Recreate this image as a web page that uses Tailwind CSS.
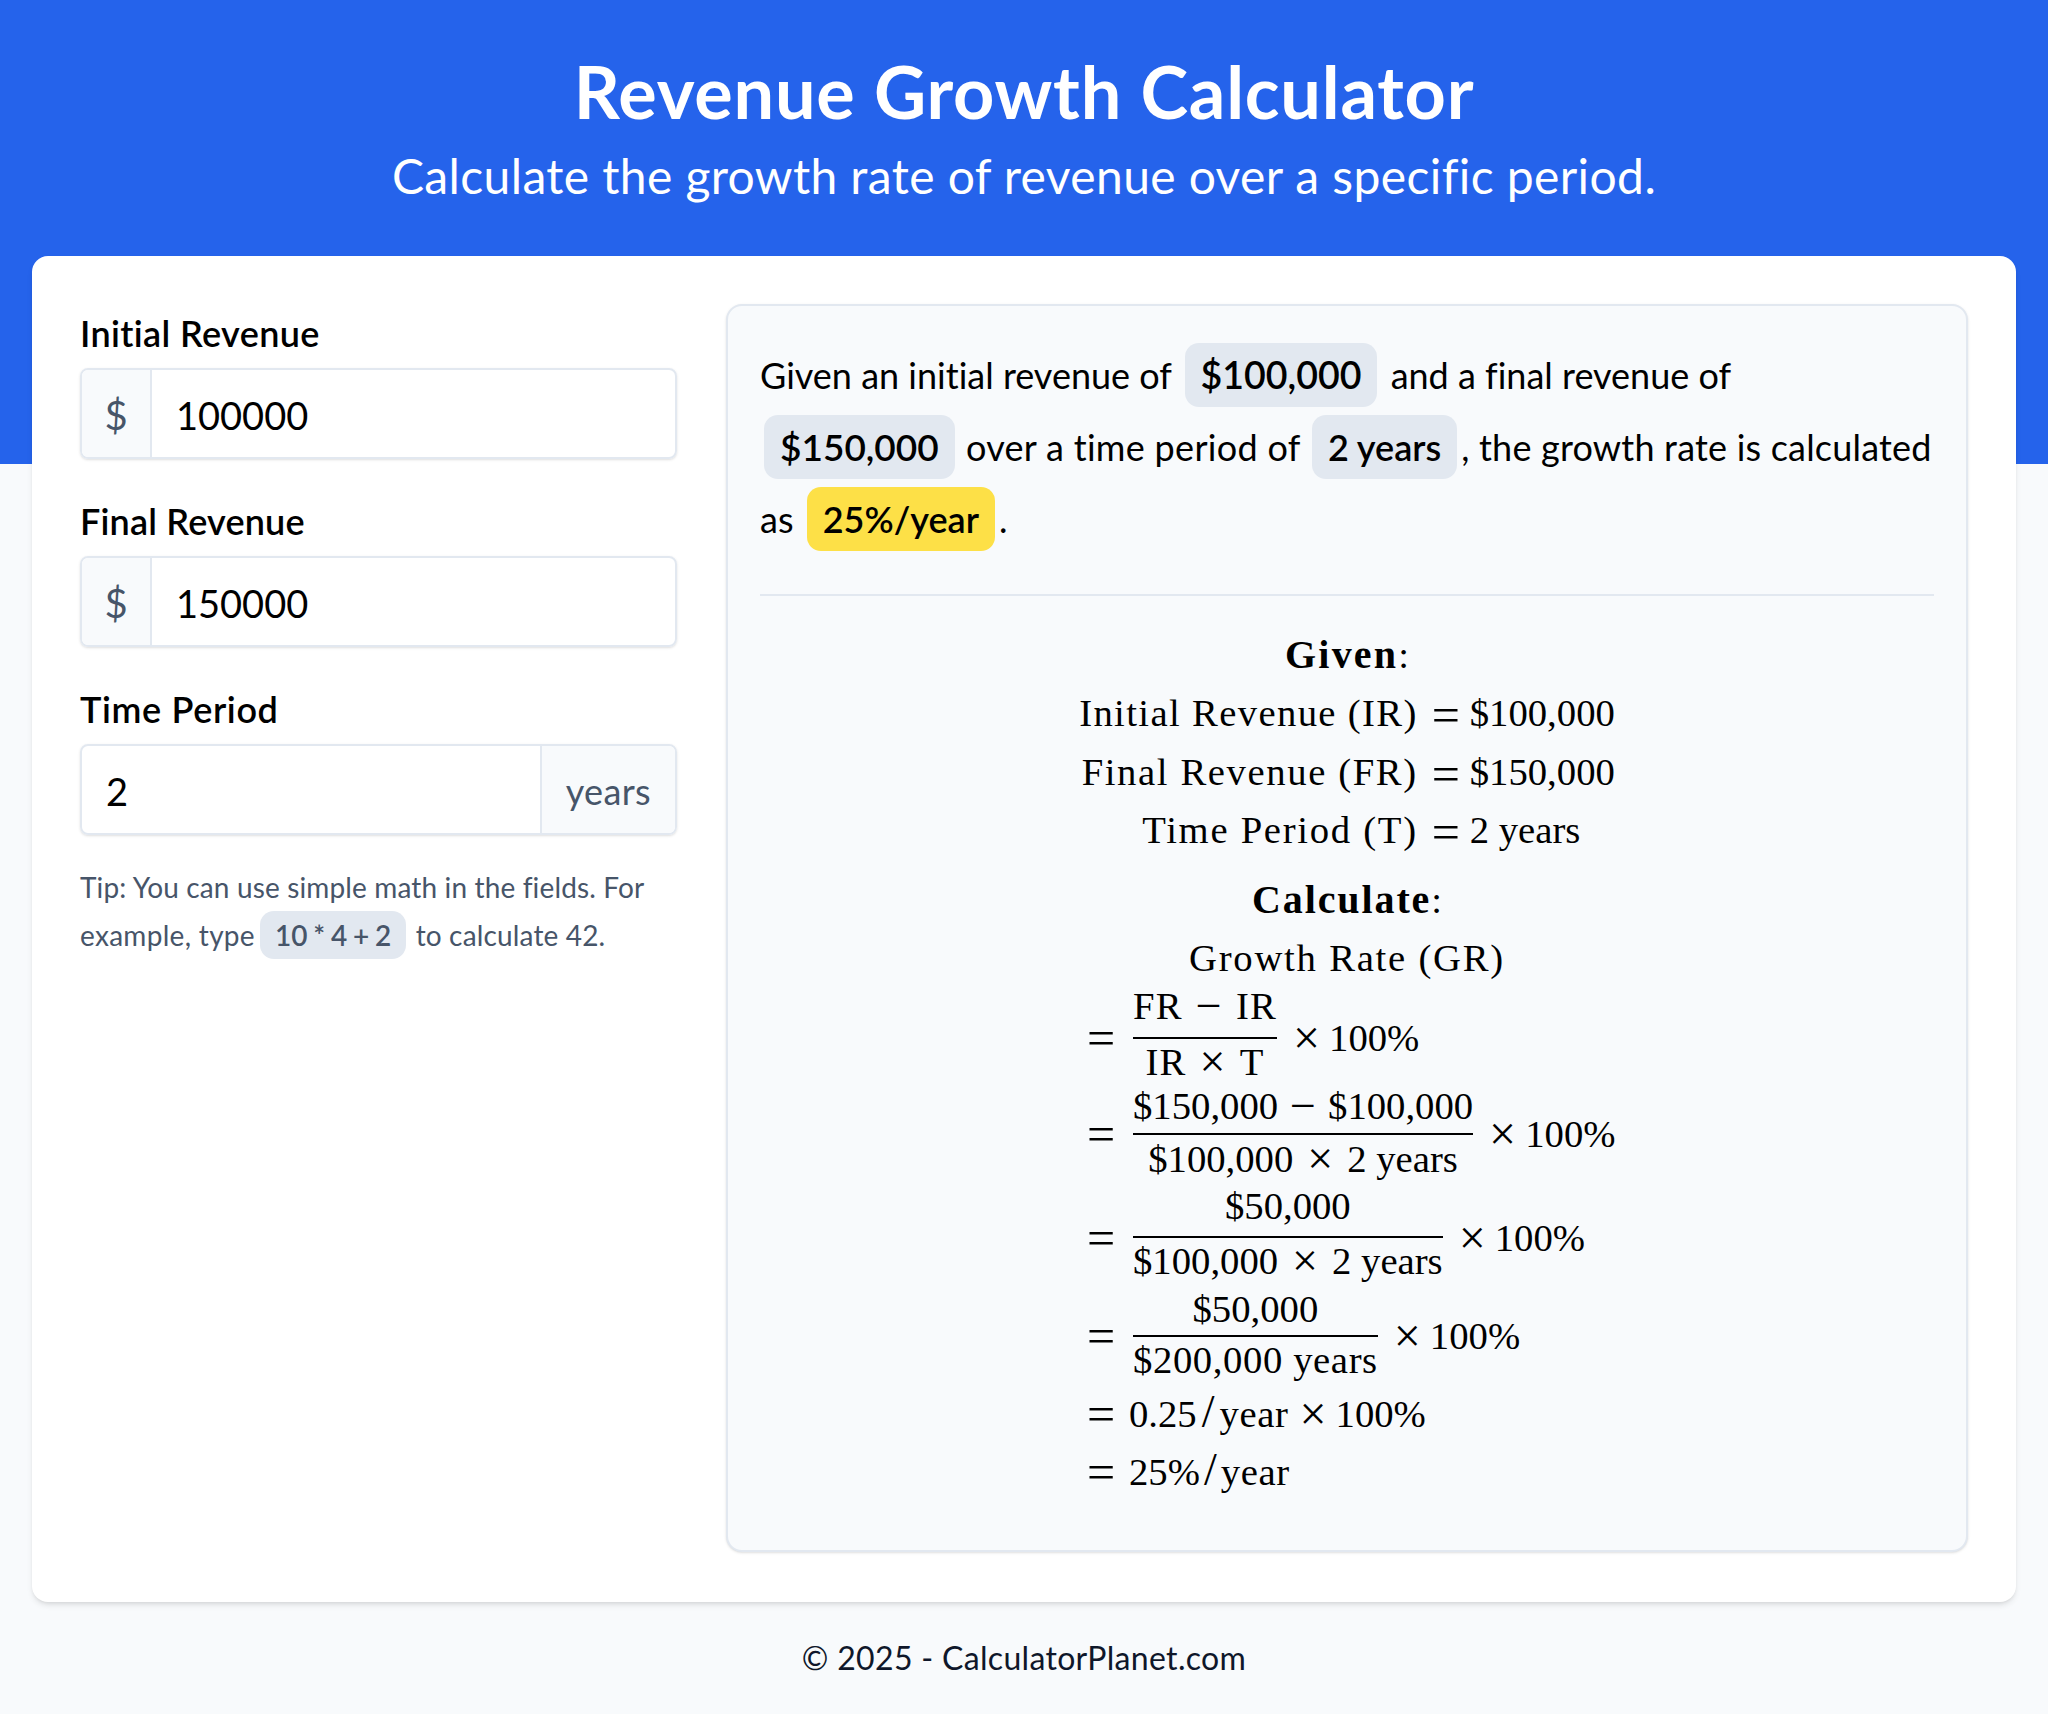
<!DOCTYPE html>
<html lang="en">
<head>
    <meta charset="UTF-8">
    <meta name="viewport" content="width=device-width, initial-scale=1.0">
    <title>Revenue Growth Calculator</title>
    <script src="https://cdn.jsdelivr.net/npm/@tailwindcss/browser@4"></script>
</head>
<body class="bg-[#f8fafc] font-['Lato',sans-serif] text-black [font-variant-ligatures:none]">

    <!-- Header -->
    <header class="bg-[#2563eb] h-[464px] pt-[43px] text-center text-white">
        <h1 class="text-[72px] leading-[97px] font-bold tracking-[0.011em]">Revenue Growth Calculator</h1>
        <p class="text-[48px] leading-[72px] tracking-[0.008em]">Calculate the growth rate of revenue over a specific period.</p>
    </header>

    <!-- Card -->
    <main class="relative mx-[32px] -mt-[208px] h-[1346px] bg-white rounded-[16px] shadow-md p-[48px] flex gap-[49px]">

        <!-- Inputs -->
        <section class="w-[597px] shrink-0">
            <label class="block text-[36px] leading-[48px] font-semibold tracking-[0.01em] mt-[5px] mb-[11px]">Initial Revenue</label>
            <div class="flex h-[91px] border-2 border-[#e2e8f0] rounded-[8px] shadow-sm overflow-hidden">
                <span class="w-[70px] pt-[3px] flex items-center justify-center bg-[#f8fafc] border-r-2 border-[#e2e8f0] text-[40px] text-[#475569]">$</span>
                <div class="flex-1 pt-[3px] flex items-center px-[24px] text-[38px]">100000</div>
            </div>

            <label class="block text-[36px] leading-[48px] font-semibold tracking-[0.005em] mt-[38px] mb-[11px]">Final Revenue</label>
            <div class="flex h-[91px] border-2 border-[#e2e8f0] rounded-[8px] shadow-sm overflow-hidden">
                <span class="w-[70px] pt-[3px] flex items-center justify-center bg-[#f8fafc] border-r-2 border-[#e2e8f0] text-[40px] text-[#475569]">$</span>
                <div class="flex-1 pt-[3px] flex items-center px-[24px] text-[38px]">150000</div>
            </div>

            <label class="block text-[36px] leading-[48px] font-semibold tracking-[0.018em] mt-[38px] mb-[11px]">Time Period</label>
            <div class="flex h-[91px] border-2 border-[#e2e8f0] rounded-[8px] shadow-sm overflow-hidden">
                <div class="flex-1 pt-[3px] flex items-center px-[24px] text-[38px]">2</div>
                <span class="flex items-center pt-[2px] pl-[24px] pr-[24px] bg-[#f8fafc] border-l-2 border-[#e2e8f0] text-[36px] tracking-[0.01em] text-[#475569]">years</span>
            </div>

            <p class="mt-[28px] text-[28px] leading-[48px] tracking-[0.005em] text-[#475569]">Tip: You can use simple math in the fields. For <span class="tracking-[0.3px]">example, type</span><code class="font-['Lato',sans-serif] font-semibold inline-block bg-[#e2e8f0] rounded-[14px] ml-[5px] mr-[2px] px-[15px] leading-[48px] [word-spacing:-1.5px]">10 * 4 + 2</code> <span class="tracking-[0.15px]">to calculate 42.</span></p>
        </section>

        <!-- Result panel -->
        <section class="flex-1 bg-[#f8fafc] border-2 border-[#e2e8f0] rounded-[16px] shadow-sm px-[32px] pt-[33px] h-[1248px]">
            <p class="text-[36px] leading-[72px]">Given an initial revenue of <span class="inline-block mx-[4px] px-[16px] text-[37.5px] leading-[64px] bg-[#e2e8f0] rounded-[14px] font-semibold">$100,000</span> and a final revenue of <span class="inline-block ml-[4px] mr-[2px] px-[16px] text-[37px] leading-[64px] bg-[#e2e8f0] rounded-[14px] font-semibold">$150,000</span> <span class="tracking-[0.3px]">over a time period of</span> <span class="inline-block ml-[2px] mr-[4px] px-[16px] text-[36px] leading-[64px] bg-[#e2e8f0] rounded-[14px] font-semibold">2 years</span><span class="tracking-[0.2px]">, the growth rate is calculated</span> as <span class="inline-block mx-[4px] px-[16px] text-[36px] leading-[64px] bg-[#fde047] rounded-[14px] font-semibold">25%/year</span>.</p>

            <hr class="mt-[39px] border-t-2 border-[#e2e8f0]">

            <!-- Working -->
            <div class="mt-[30px] flex flex-col items-center font-['Liberation_Serif',serif] text-[38.7px] leading-[58.4px]">
                <div><span class="font-bold text-[40px] tracking-[2.2px]">Given</span>:</div>
                <div class="grid grid-cols-[auto_38px_auto]">
                    <div class="text-right pr-[14px] tracking-[1.35px]">Initial Revenue (IR)</div><div><span class="text-[50px] leading-none align-[-6px]">=</span></div><div>$100,000</div>
                    <div class="text-right pr-[14px] tracking-[1.6px]">Final Revenue (FR)</div><div><span class="text-[50px] leading-none align-[-6px]">=</span></div><div>$150,000</div>
                    <div class="text-right pr-[14px] tracking-[1.7px]">Time Period (T)</div><div><span class="text-[50px] leading-none align-[-6px]">=</span></div><div>2 years</div>
                </div>
                <div class="mt-[11px]"><span class="font-bold text-[40px] tracking-[1.9px]">Calculate</span>:</div>
                <div class="tracking-[1.75px]">Growth Rate (GR)</div>
                <div class="flex flex-col self-start ml-[327px] mt-[2px]">
                    <div class="flex items-center h-[98px]">
                        <span class="w-[46px] text-[50px] leading-none">=</span>
                        <span class="inline-flex flex-col items-center leading-[44px]"><span class="pb-[8px] tracking-[1.2px]">FR<span class="mx-[13px] text-[46px] leading-none align-[-2px]">&minus;</span>IR</span><span class="self-stretch pb-[8px] text-center border-t-2 border-black tracking-[1.2px]">IR<span class="mx-[13px] text-[46px] leading-none align-[-2px]">&times;</span>T</span></span>
                        <span class="ml-[16px] mr-[9px] text-[48px] leading-none">&times;</span><span>100%</span>
                    </div>
                    <div class="flex items-center h-[99px] -mt-[3px] mb-[3px]">
                        <span class="w-[46px] text-[50px] leading-none">=</span>
                        <span class="inline-flex flex-col items-center leading-[44px]"><span class="pt-[4px] pb-[4px]">$150,000<span class="mx-[12px] text-[46px] leading-none align-[-2px]">&minus;</span>$100,000</span><span class="self-stretch pt-[1px] pb-[7px] text-center border-t-2 border-black">$100,000<span class="mx-[14px] text-[46px] leading-none align-[-2px]">&times;</span>2 years</span></span>
                        <span class="ml-[16px] mr-[9px] text-[48px] leading-none">&times;</span><span>100%</span>
                    </div>
                    <div class="flex items-center h-[101px] mt-[1px] -mb-[1px]">
                        <span class="w-[46px] text-[50px] leading-none">=</span>
                        <span class="inline-flex flex-col items-center leading-[44px]"><span class="pb-[8px]">$50,000</span><span class="self-stretch pb-[8px] text-center border-t-2 border-black">$100,000<span class="mx-[14px] text-[46px] leading-none align-[-2px]">&times;</span>2 years</span></span>
                        <span class="ml-[16px] mr-[9px] text-[48px] leading-none">&times;</span><span>100%</span>
                    </div>
                    <div class="flex items-center h-[101px] -mt-[2px] mb-[2px]">
                        <span class="w-[46px] text-[50px] leading-none">=</span>
                        <span class="inline-flex flex-col items-center leading-[44px]"><span class="pt-[4px] pb-[4px]">$50,000</span><span class="self-stretch pt-[1px] pb-[7px] text-center border-t-2 border-black tracking-[0.6px]">$200,000 years</span></span>
                        <span class="ml-[16px] mr-[9px] text-[48px] leading-none">&times;</span><span>100%</span>
                    </div>
                    <div class="flex items-center h-[52px]">
                        <span class="w-[42px] text-[50px] leading-none">=</span>
                        <span>0.25<span class="mx-[5px] text-[46px] leading-none">/</span><span class="tracking-[0.6px]">year</span></span><span class="ml-[11px] mr-[9px] text-[48px] leading-none">&times;</span><span>100%</span>
                    </div>
                    <div class="flex items-center h-[64px]">
                        <span class="w-[42px] text-[50px] leading-none">=</span>
                        <span>25%<span class="mx-[4px] text-[46px] leading-none">/</span><span class="tracking-[0.6px]">year</span></span>
                    </div>
                </div>
            </div>
        </section>
    </main>

    <footer class="h-[112px] flex items-center justify-center text-[32px] tracking-[0.01em] text-[#0f172a]">&copy; 2025 - CalculatorPlanet.com</footer>

</body>
</html>
